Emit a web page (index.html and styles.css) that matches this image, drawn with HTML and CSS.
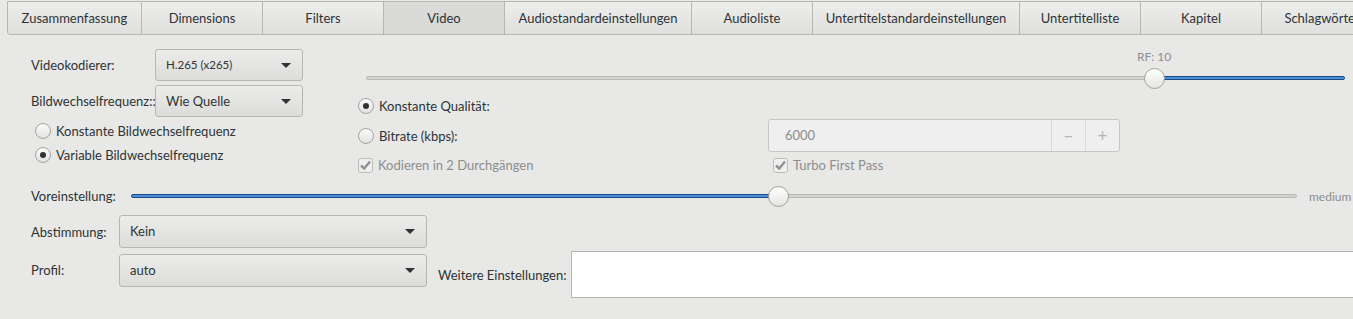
FILE: index.html
```html
<!DOCTYPE html>
<html>

<head>
    <title>Video</title>
    <link rel="stylesheet" href="styles.css">
</head>

<body>
    <div class="tabs">
        <div class="tab" style="width: 135px">Zusammenfassung</div>
        <div class="tab" style="width: 121px">Dimensions</div>
        <div class="tab" style="width: 121px">Filters</div>
        <div class="tab active" style="width: 121px">Video</div>
        <div class="tab" style="width: 187px">Audiostandardeinstellungen</div>
        <div class="tab" style="width: 121px">Audioliste</div>
        <div class="tab" style="width: 207px">Untertitelstandardeinstellungen</div>
        <div class="tab" style="width: 121px">Untertitelliste</div>
        <div class="tab" style="width: 121px">Kapitel</div>
        <div class="tab" style="width: 121px">Schlagwörter</div>
    </div>

    <div class="page">
        <div class="top">
            <div class="left">
                <div class="row">
                    <span class="label">Videokodierer:</span>
                    <div class="combo small">H.265 (x265)<span class="arrow"></span></div>
                </div>
                <div class="row">
                    <span class="label">Bildwechselfrequenz::</span>
                    <div class="combo">Wie Quelle<span class="arrow"></span></div>
                </div>
                <div class="radio-row first"><span class="radio"></span>Konstante Bildwechselfrequenz</div>
                <div class="radio-row"><span class="radio checked"></span>Variable Bildwechselfrequenz</div>
            </div>

            <div class="right">
                <div class="rf-label" style="padding-left: 779px">RF: 10</div>
                <div class="slider">
                    <div class="track"></div>
                    <div class="fill" style="left: 788px; right: 0"></div>
                    <div class="knob" style="left: 778px"></div>
                </div>
                <div class="quality">
                    <div class="radio-row span"><span class="radio checked"></span>Konstante Qualität:</div>
                    <div class="radio-row"><span class="radio"></span>Bitrate (kbps):</div>
                    <div class="spin">
                        <span class="spin-value">6000</span>
                        <span class="spin-btn">−</span>
                        <span class="spin-btn">+</span>
                    </div>
                    <div class="check-row">
                        <span class="check"><svg width="13" height="13" viewBox="0 0 13 13"><path d="M2 6.5 L5.2 9.5 L11 2.5" fill="none" stroke="#8f9192" stroke-width="2.4"/></svg></span>
                        Kodieren in 2 Durchgängen
                    </div>
                    <div class="check-row turbo">
                        <span class="check"><svg width="13" height="13" viewBox="0 0 13 13"><path d="M2 6.5 L5.2 9.5 L11 2.5" fill="none" stroke="#8f9192" stroke-width="2.4"/></svg></span>
                        Turbo First Pass
                    </div>
                </div>
            </div>
        </div>

        <div class="preset">
            <span class="preset-label">Voreinstellung:</span>
            <div class="slider wide">
                <div class="track"></div>
                <div class="fill" style="left: 0; width: 647px"></div>
                <div class="knob" style="left: 637px"></div>
            </div>
            <span class="preset-value">medium</span>
        </div>

        <div class="bottom">
            <span class="label">Abstimmung:</span>
            <div class="combo big">Kein<span class="arrow"></span></div>
            <span></span>
            <span></span>
            <span class="label profil">Profil:</span>
            <div class="combo big profil-combo">auto<span class="arrow"></span></div>
            <span class="label more">Weitere Einstellungen:</span>
            <div class="entry"></div>
        </div>
    </div>
</body>

</html>
```

FILE: styles.css
```css
body {
    margin: 0;
    background-color: #e8e8e7;
    font-family: Lato, "Open Sans", sans-serif;
    font-size: 13px;
    color: #2e3436;
    overflow: hidden;
    width: 1353px;
}

.tabs {
    display: flex;
    padding-left: 7px;
    margin-top: 1px;
    white-space: nowrap;
}

.tab {
    flex: none;
    box-sizing: border-box;
    height: 34px;
    line-height: 32px;
    text-align: center;
    border: 1px solid #b6b6b3;
    border-left: none;
    background: linear-gradient(#ededec, #dfdfdd);
}

.tab:first-child {
    border-left: 1px solid #b6b6b3;
    border-bottom-left-radius: 3px;
}

.tab.active {
    background: #dadad9;
}

.top {
    display: flex;
    padding: 14px 8px 0 31px;
}

.left {
    width: 327px;
    flex: none;
}

.row {
    display: flex;
    align-items: center;
    height: 32px;
    margin-bottom: 4px;
}

.row .label {
    width: 124px;
    flex: none;
}

.combo {
    position: relative;
    box-sizing: border-box;
    width: 148px;
    height: 32px;
    line-height: 30px;
    padding-left: 10px;
    border: 1px solid #b6b6b3;
    border-radius: 3px;
    background: linear-gradient(#ececeb, #dcdcda);
}

.combo.small {
    font-size: 11.5px;
}

.combo.big {
    width: 308px;
    height: 33px;
    line-height: 31px;
}

.arrow {
    position: absolute;
    right: 11px;
    top: 13px;
    border-left: 5px solid transparent;
    border-right: 5px solid transparent;
    border-top: 5px solid #2e3436;
}

.radio-row {
    display: flex;
    align-items: center;
    height: 24px;
}

.left .radio-row {
    padding-left: 4px;
}

.left .radio-row.first {
    margin-top: -2px;
}

.radio {
    box-sizing: border-box;
    width: 16px;
    height: 16px;
    margin-right: 5px;
    border: 1px solid #a3a3a0;
    border-radius: 50%;
    background: linear-gradient(#fbfbfb, #e2e2e0);
    position: relative;
}

.radio.checked::after {
    content: "";
    position: absolute;
    left: 4px;
    top: 4px;
    width: 6px;
    height: 6px;
    border-radius: 50%;
    background: #2e3436;
}

.right {
    flex: 1;
}

.rf-label {
    height: 16px;
    line-height: 16px;
    color: #8b8e8f;
    font-size: 12px;
}

.slider {
    position: relative;
    height: 20px;
    margin: 3px 0 0 8px;
}

.track {
    position: absolute;
    left: 0;
    right: 0;
    top: 8px;
    height: 2px;
    border: 1px solid #b9b9b6;
    border-radius: 2px;
    background: #d3d3d1;
}

.fill {
    position: absolute;
    top: 8px;
    height: 2px;
    border: 1px solid #1b4b80;
    border-radius: 2px;
    background: #4a90d9;
}

.knob {
    position: absolute;
    top: 0;
    box-sizing: border-box;
    width: 21px;
    height: 21px;
    border: 1px solid #a0a09d;
    border-radius: 50%;
    background: linear-gradient(#ffffff, #e4e4e2);
}

.quality {
    display: grid;
    grid-template-columns: 410px 352px;
    margin-top: 6px;
}

.quality .span {
    grid-column: span 2;
}

.quality .radio-row {
    height: 24px;
}

.quality .radio-row:nth-child(2) {
    height: 33px;
    margin-top: 1px;
}

.spin {
    display: flex;
    box-sizing: border-box;
    height: 33px;
    margin-top: 1px;
    border: 1px solid #c6c6c4;
    border-radius: 3px;
    background: #efefef;
    color: #8b8e8f;
}

.spin-value {
    flex: 1;
    line-height: 31px;
    padding-left: 16px;
}

.spin-btn {
    width: 33px;
    line-height: 31px;
    text-align: center;
    border-left: 1px solid #d8d8d6;
    font-size: 17px;
    color: #b4b4b2;
}

.check-row {
    display: flex;
    align-items: center;
    height: 24px;
    margin-top: 1px;
    color: #8b8e8f;
}

.check-row.turbo {
    padding-left: 5px;
}

.check {
    display: flex;
    align-items: center;
    justify-content: center;
    box-sizing: border-box;
    width: 15px;
    height: 15px;
    margin-right: 5px;
    border: 1px solid #bdbdbb;
    border-radius: 3px;
    background: #efefee;
}

.preset {
    display: flex;
    align-items: center;
    height: 20px;
    margin-top: 9px;
    padding-left: 31px;
}

.preset-label {
    width: 100px;
    flex: none;
}

.slider.wide {
    width: 1166px;
    flex: none;
    margin: 0;
}

.preset-value {
    margin-left: 12px;
    color: #8b8e8f;
    font-size: 12px;
}

.bottom {
    display: grid;
    grid-template-columns: 88px 308px 144px 1fr;
    grid-template-rows: 33px 47px;
    row-gap: 3px;
    align-items: center;
    margin-top: 9px;
    padding-left: 31px;
    white-space: nowrap;
}

.bottom .profil {
    align-self: start;
    line-height: 33px;
    margin-top: 3px;
}

.bottom .profil-combo {
    align-self: start;
    margin-top: 3px;
}

.bottom .more {
    padding-left: 11px;
    padding-top: 1px;
}

.entry {
    box-sizing: border-box;
    height: 47px;
    margin-right: -20px;
    border: 1px solid #b5b5b3;
    background: #ffffff;
}
```
